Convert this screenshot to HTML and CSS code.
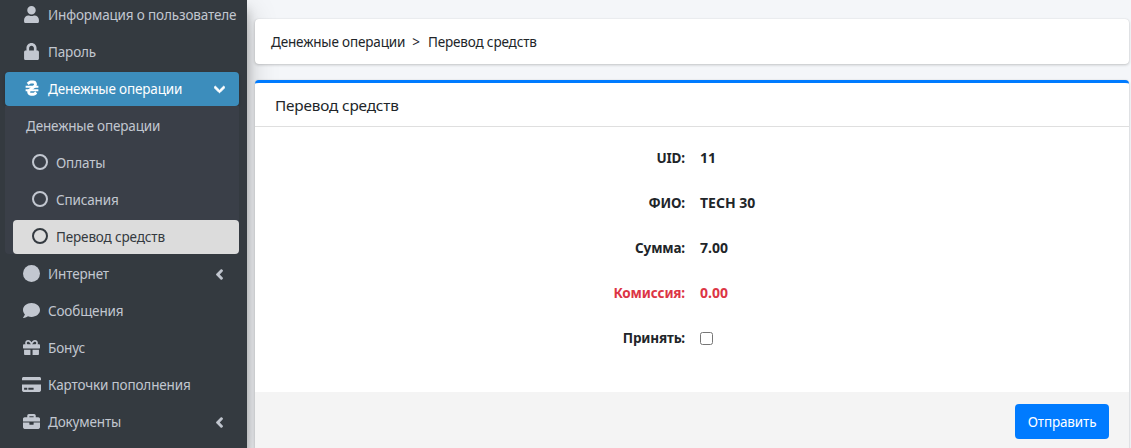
FILE: index.html
```html
<!DOCTYPE html>
<html lang="ru">
<head>
<meta charset="utf-8">
<title>Перевод средств</title>
<link rel="stylesheet" href="styles.css">
</head>
<body>
<div class="app">
  <aside class="sidebar">
    <nav class="menu">
      <a class="item"><span class="ico"><svg class="i-user" viewBox="0 0 448 512"><path d="M224 256c70.7 0 128-57.3 128-128S294.7 0 224 0 96 57.3 96 128s57.3 128 128 128zm89.6 32h-16.7c-22.2 10.2-46.9 16-72.9 16s-50.6-5.8-72.9-16h-16.7C60.2 288 0 348.2 0 422.4V464c0 26.5 21.5 48 48 48h352c26.5 0 48-21.5 48-48v-41.6c0-74.2-60.2-134.4-134.4-134.4z"/></svg></span><span>Информация о пользователе</span></a>
      <a class="item"><span class="ico"><svg class="i-user" viewBox="0 0 448 512"><path d="M400 224h-24v-72C376 68.2 307.8 0 224 0S72 68.2 72 152v72H48c-26.5 0-48 21.5-48 48v192c0 26.5 21.5 48 48 48h352c26.5 0 48-21.5 48-48V272c0-26.5-21.5-48-48-48zm-104 0H152v-72c0-39.7 32.3-72 72-72s72 32.3 72 72v72z"/></svg></span><span>Пароль</span></a>
      <a class="item active"><span class="ico"><svg class="i-hryvnia" viewBox="0 0 384 512"><path d="M62 118 L112 78 Q132 62 156 62 H232 C292 62 322 136 274 182 L112 312 C66 352 98 430 156 430 H232 Q254 430 272 416 L322 376" fill="none" stroke="#fff" stroke-width="88"/><path d="M0 176 H384 V236 H0 Z M0 276 H384 V336 H0 Z" fill="#fff"/></svg></span><span>Денежные операции</span><svg class="chev-d" viewBox="0 0 448 512"><path d="M207.029 381.476L12.686 187.132c-9.373-9.373-9.373-24.569 0-33.941l22.667-22.667c9.357-9.357 24.522-9.375 33.901-.04L224 284.505l154.745-154.021c9.379-9.335 24.544-9.317 33.901.04l22.667 22.667c9.373 9.373 9.373 24.569 0 33.941L240.971 381.476c-9.373 9.372-24.569 9.372-33.942 0z"/></svg></a>
      <div class="sub">
        <div class="sub-title">Денежные операции</div>
        <a class="sub-item"><span class="ring"></span><span>Оплаты</span></a>
        <a class="sub-item"><span class="ring"></span><span>Списания</span></a>
        <a class="sub-item current"><span class="ring"></span><span>Перевод средств</span></a>
      </div>
      <a class="item"><span class="ico"><span class="dot"></span></span><span>Интернет</span><svg class="chev-l" viewBox="0 0 320 512"><path d="M34.52 239.03L228.87 44.69c9.37-9.37 24.57-9.37 33.94 0l22.67 22.67c9.36 9.36 9.37 24.52.04 33.9L131.49 256l154.02 154.75c9.34 9.38 9.32 24.54-.04 33.9l-22.67 22.67c-9.37 9.37-24.57 9.37-33.94 0L34.52 272.97c-9.37-9.37-9.37-24.57 0-33.94z"/></svg></a>
      <a class="item"><span class="ico"><svg class="i-wide" viewBox="0 0 512 512"><path d="M256 32C114.6 32 0 125.1 0 240c0 49.6 21.4 95 57 130.7C44.5 421.1 2.7 466 2.2 466.5c-2.2 2.3-2.8 5.7-1.5 8.7S4.8 480 8 480c66.3 0 116-31.8 140.6-51.4 32.7 12.3 69 19.4 107.4 19.4 141.4 0 256-93.1 256-208S397.4 32 256 32z"/></svg></span><span>Сообщения</span></a>
      <a class="item"><span class="ico"><svg class="i-wide" viewBox="0 0 512 512"><path d="M32 448c0 17.7 14.3 32 32 32h160V320H32v128zm256 32h160c17.7 0 32-14.3 32-32V320H288v160zm192-320h-42.1c6.2-12.1 10.1-25.5 10.1-40 0-48.5-39.5-88-88-88-41.6 0-68.5 21.3-103 68.3-34.5-47-61.4-68.3-103-68.3-48.5 0-88 39.5-88 88 0 14.5 3.8 27.9 10.1 40H32c-17.7 0-32 14.3-32 32v80c0 8.8 7.2 16 16 16h480c8.8 0 16-7.2 16-16v-80c0-17.7-14.3-32-32-32zm-326.1 0c-22.1 0-40-17.9-40-40s17.9-40 40-40c19.9 0 34.6 3.3 86.1 80h-86.1zm206.1 0h-86.1c51.4-76.5 65.7-80 86.1-80 22.1 0 40 17.9 40 40s-17.9 40-40 40z"/></svg></span><span>Бонус</span></a>
      <a class="item"><span class="ico"><svg class="i-card" viewBox="0 0 576 512"><path d="M0 432c0 26.5 21.5 48 48 48h480c26.5 0 48-21.5 48-48V256H0v176zm192-68c0-6.6 5.4-12 12-12h136c6.6 0 12 5.4 12 12v40c0 6.6-5.4 12-12 12H204c-6.6 0-12-5.4-12-12v-40zm-128 0c0-6.6 5.4-12 12-12h72c6.6 0 12 5.4 12 12v40c0 6.6-5.4 12-12 12H76c-6.6 0-12-5.4-12-12v-40zM576 80v48H0V80c0-26.5 21.5-48 48-48h480c26.5 0 48 21.5 48 48z"/></svg></span><span>Карточки пополнения</span></a>
      <a class="item"><span class="ico"><svg class="i-wide" viewBox="0 0 512 512"><path d="M320 336c0 8.84-7.16 16-16 16h-96c-8.84 0-16-7.16-16-16v-48H0v144c0 25.6 22.4 48 48 48h416c25.6 0 48-22.4 48-48V288H320v48zm144-208h-80V80c0-25.6-22.4-48-48-48H176c-25.6 0-48 22.4-48 48v48H48c-25.6 0-48 22.4-48 48v80h512v-80c0-25.6-22.4-48-48-48zm-144 0H192V96h128v32z"/></svg></span><span>Документы</span><svg class="chev-l" viewBox="0 0 320 512"><path d="M34.52 239.03L228.87 44.69c9.37-9.37 24.57-9.37 33.94 0l22.67 22.67c9.36 9.36 9.37 24.52.04 33.9L131.49 256l154.02 154.75c9.34 9.38 9.32 24.54-.04 33.9l-22.67 22.67c-9.37 9.37-24.57 9.37-33.94 0L34.52 272.97c-9.37-9.37-9.37-24.57 0-33.94z"/></svg></a>
    </nav>
  </aside>
  <main class="content">
    <div class="crumbs"><span>Денежные операции</span><span class="sep">&gt;</span><span>Перевод средств</span></div>
    <section class="card">
      <header class="card-head">Перевод средств</header>
      <div class="card-body">
        <div class="row"><div class="lbl">UID:</div><div class="val">11</div></div>
        <div class="row"><div class="lbl">ФИО:</div><div class="val">TECH 30</div></div>
        <div class="row"><div class="lbl">Сумма:</div><div class="val">7.00</div></div>
        <div class="row danger"><div class="lbl">Комиссия:</div><div class="val">0.00</div></div>
        <div class="row"><label class="lbl" for="accept">Принять:</label><div class="val"><input id="accept" class="check" type="checkbox"></div></div>
      </div>
      <footer class="card-foot"><button class="btn" type="button">Отправить</button></footer>
    </section>
  </main>
</div>
</body>
</html>
```

FILE: styles.css
```css
* { box-sizing: border-box; }
html, body { margin: 0; height: 100%; overflow: hidden; }
body {
  font-family: "Noto Sans", "Open Sans", sans-serif;
  font-size: 13.5px;
  letter-spacing: -0.15px;
  color: #212529;
  background: #f4f6f9;
}
.app { display: flex; height: 448px; overflow: hidden; }

.sidebar {
  flex: 0 0 247px;
  background: #343a40;
  box-shadow: 0 14px 28px rgba(0,0,0,.25), 0 10px 10px rgba(0,0,0,.22);
  color: #c2c7d0;
  overflow: hidden;
}
.menu { display: flex; flex-direction: column; gap: 3px; margin: -2px 8px 0 5px; }
.item {
  display: flex; align-items: center;
  height: 34px; padding: 0 15px 0 18px;
  border-radius: 4px;
  white-space: nowrap;
}
.item.active { background: #3c8dbc; color: #fff; box-shadow: 0 1px 3px rgba(0,0,0,.2); }
.ico { flex: 0 0 25px; display: flex; justify-content: flex-start; align-items: center; height: 17px; margin-bottom: 2px; }
.ico svg { fill: #c2c7d0; display: block; }
.i-user { width: 15px; height: 17px; margin-left: 1px; }
.i-hryvnia { width: 14px; height: 17px; margin-left: 2px; }
.i-wide { width: 17px; height: 17px; }
.i-card { width: 19px; height: 17px; margin-left: -1px; }
.dot { width: 17px; height: 17px; border-radius: 50%; background: #c2c7d0; }
.chev-d { width: 11px; height: 13px; margin: 0 -1px 0 auto; fill: #fff; stroke: #fff; stroke-width: 40; }
.chev-l { width: 7px; height: 11px; margin: 0 1px 0 auto; fill: #c2c7d0; stroke: #c2c7d0; stroke-width: 50; }

.sub {
  display: flex; flex-direction: column; gap: 3px;
  background: #3a3f48;
  border-radius: 0 0 4px 4px;
  margin-top: -3px;
}
.sub-title { height: 37px; padding: 3px 0 0 21px; display: flex; align-items: center; }
.sub-item {
  display: flex; align-items: center;
  height: 34px; margin-left: 8px; padding: 0 0 0 19px;
  border-radius: 4px;
}
.sub-item.current { background: #dcdcdc; color: #343a40; }
.ring { flex: 0 0 16px; height: 16px; border: 2px solid #c2c7d0; border-radius: 50%; margin: 0 8px 2px 0; }
.current .ring { border-color: #343a40; }

.content { flex: 1; padding: 19px 2px 0 8px; min-width: 0; }
.crumbs {
  height: 45px; display: flex; align-items: center; gap: 7px;
  padding-left: 16px;
  background: #fff; border-radius: 4px;
  box-shadow: 0 0 1px rgba(0,0,0,.125), 0 1px 3px rgba(0,0,0,.2);
  margin-bottom: 16px;
}
.sep { margin-right: 1px; }
.card {
  background: #fff; border-top: 3px solid #007bff; border-radius: 4px;
  box-shadow: 0 0 1px rgba(0,0,0,.125), 0 1px 3px rgba(0,0,0,.2);
}
.card-head {
  height: 44px; display: flex; align-items: center;
  padding-left: 20px;
  font-size: 15.3px;
  border-bottom: 1px solid rgba(0,0,0,.125);
}
.card-body { padding-top: 8px; height: 265px; }
.row { display: grid; grid-template-columns: 430px 1fr; column-gap: 15px; height: 45px; align-items: center; font-weight: 700; }
.lbl { text-align: right; }
.val { display: flex; align-items: center; font-size: 14px; letter-spacing: 0; }
.danger { color: #dc3545; }
.check { margin: 2px 0 0; width: 13px; height: 13px; }
.card-foot {
  height: 80px; padding: 12px 20px 0 0;
  background: #f4f4f4;
  display: flex; justify-content: flex-end; align-items: flex-start;
}
.btn {
  width: 94px; height: 35px; border: 0; border-radius: 4px;
  background: #007bff; color: #fff;
  font: inherit; letter-spacing: inherit;
}
```
